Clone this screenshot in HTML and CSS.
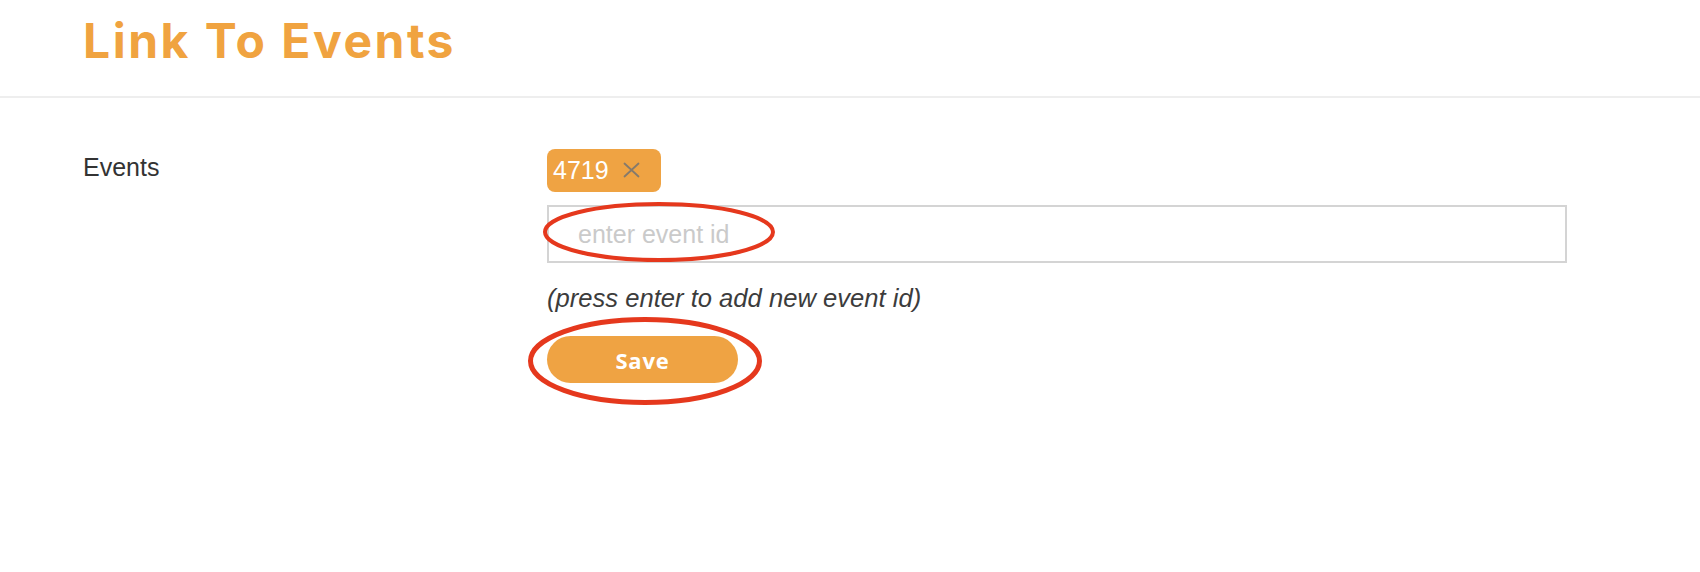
FILE: index.html
```html
<!DOCTYPE html>
<html lang="en">
<head>
<meta charset="utf-8">
<title>Link To Events</title>
<link rel="stylesheet" href="styles.css">
</head>
<body>
<div class="page">
  <header class="header">
    <h1 class="title">Link To Events</h1>
  </header>
  <section class="form-row">
    <div class="label">Events</div>
    <div class="field">
      <div class="tags">
        <span class="tag">4719
          <svg class="tag-x" width="17" height="16" viewBox="0 0 17 16" aria-hidden="true">
            <path d="M1.5 1.5 L15.5 14.5 M15.5 1.5 L1.5 14.5" stroke="#857a6c" stroke-width="1.8" fill="none" stroke-linecap="round"/>
          </svg>
        </span>
      </div>
      <input class="event-input" type="text" placeholder="enter event id">
      <p class="hint">(press enter to add new event id)</p>
      <button class="save-btn" type="button">Save</button>
    </div>
  </section>
  <svg class="annotations" width="1700" height="572" viewBox="0 0 1700 572" aria-hidden="true">
    <ellipse cx="659" cy="232" rx="114" ry="28" fill="none" stroke="#e5381d" stroke-width="4"/>
    <ellipse cx="645" cy="361" rx="114.5" ry="41.5" fill="none" stroke="#e5381d" stroke-width="5"/>
  </svg>
</div>
</body>
</html>
```

FILE: styles.css
```css
html, body {
  margin: 0;
  padding: 0;
  background: #ffffff;
}

.page {
  position: relative;
  width: 1700px;
  height: 572px;
  overflow: hidden;
  font-family: "Liberation Sans", Arial, sans-serif;
}

.header {
  padding: 11px 0 25px 83px;
  border-bottom: 2px solid #eeeeee;
}

.title {
  margin: 0;
  font-family: Inter, "Noto Sans", sans-serif;
  font-weight: 700;
  font-size: 48px;
  line-height: 60px;
  letter-spacing: 2.5px;
  color: #f0a340;
}

.form-row {
  display: grid;
  grid-template-columns: 464px 1020px;
  padding: 51px 0 0 83px;
  align-items: start;
}

.label {
  padding-top: 3px;
  font-size: 25px;
  line-height: 30px;
  color: #333333;
}

.field {
  display: flex;
  flex-direction: column;
  align-items: flex-start;
}

.tags {
  display: flex;
  gap: 8px;
}

.tag {
  display: inline-flex;
  align-items: center;
  gap: 14px;
  padding: 6px 21px 7px 6px;
  background: #efa343;
  color: #ffffff;
  border-radius: 8px;
  font-size: 25px;
  line-height: 30px;
}

.tag-x {
  display: block;
}

.event-input {
  box-sizing: border-box;
  width: 1020px;
  height: 58px;
  margin: 13px 0 0 0;
  padding: 0 0 0 29px;
  border: 2px solid #d4d4d4;
  border-radius: 0;
  font-family: "Liberation Sans", Arial, sans-serif;
  font-size: 25px;
  color: #333333;
  outline: none;
  background: #ffffff;
}

.event-input::placeholder {
  color: #cacaca;
}

.hint {
  margin: 20px 0 0 0;
  font-size: 25.6px;
  line-height: 30px;
  font-style: italic;
  color: #3c3c3c;
}

.save-btn {
  margin-top: 23px;
  width: 191px;
  height: 47px;
  border: none;
  border-radius: 24px;
  background: #efa343;
  color: #ffffff;
  font-family: "Open Sans", "Noto Sans", sans-serif;
  font-weight: 700;
  font-size: 22px;
  letter-spacing: 0.8px;
  padding: 0;
  cursor: pointer;
}

.annotations {
  position: absolute;
  top: 0;
  left: 0;
  pointer-events: none;
}
```
